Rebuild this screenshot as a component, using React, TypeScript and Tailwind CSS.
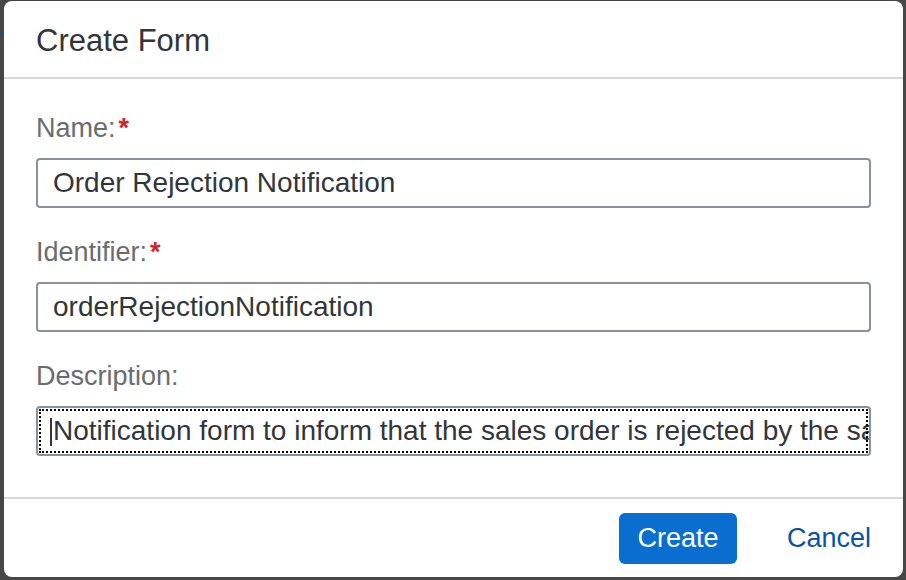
export default function App() {
  const font = { fontFamily: '"Liberation Sans", Arial, sans-serif' };
  return (
    <div
      className="w-[906px] h-[580px] bg-[#474747] pt-[1px] pl-[4px] overflow-hidden relative"
      style={font}
    >
      <div className="absolute left-0 top-[31px] w-[4px] h-[3px] bg-[#1d4f86]" />
      <div className="w-[899px] h-[576px] bg-white rounded-[8px] flex flex-col">
        <div className="h-[78px] flex items-center px-[32px] pt-[3px] border-b-2 border-[#d9d9d9]">
          <h1 className="text-[31px] text-[#32363a] leading-none">Create Form</h1>
        </div>

        <div className="flex-1 px-[32px] pt-[35px] flex flex-col">
          <Field label="Name:" required value="Order Rejection Notification" />
          <Field label="Identifier:" required value="orderRejectionNotification" />
          <Field
            label="Description:"
            value="Notification form to inform that the sales order is rejected by the sales manager"
            focused
          />
        </div>

        <div className="h-[80px] border-t-2 border-[#d9d9d9] flex items-center justify-end pr-[32px] gap-[50px]">
          <button className="h-[51px] w-[118px] bg-[#0a6ed1] rounded-[6px] text-white text-[27px]">
            Create
          </button>
          <button className="text-[#0854a0] text-[27px]">Cancel</button>
        </div>
      </div>
    </div>
  );
}

function Field({
  label,
  value,
  required,
  focused,
}: {
  label: string;
  value: string;
  required?: boolean;
  focused?: boolean;
}) {
  return (
    <div className="mb-[30px]">
      <div className="h-[28px] mb-[16px] flex items-center text-[27px] text-[#6a6d70]">
        {label}
        {required && <span className="text-[#d32030] ml-[3px] font-bold">*</span>}
      </div>
      <div className="h-[50px] w-[835px] border-2 border-[#89919a] rounded-[4px] relative overflow-hidden flex items-center pl-[15px]">
        {focused && (
          <div className="absolute inset-[1px] border-2 border-dotted border-black" />
        )}
        {focused && <div className="absolute left-[12px] top-[10px] w-[2px] h-[28px] bg-[#32363a]" />}
        <span className="text-[28px] text-[#32363a] whitespace-nowrap">{value}</span>
      </div>
    </div>
  );
}
